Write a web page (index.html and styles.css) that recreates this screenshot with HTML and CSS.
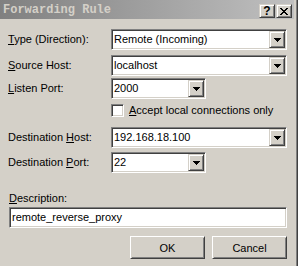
FILE: index.html
```html
<!DOCTYPE html>
<html lang="en">
<head>
    <meta charset="UTF-8">
    <meta name="viewport" content="width=device-width, initial-scale=1.0">
    <title>Forwarding Rule</title>
    <link rel="stylesheet" href="styles.css">
</head>
<body>
    <div class="window">
        <div class="titlebar">
            <span class="title">Forwarding Rule</span>
            <div class="caption-btns">
                <span class="cap-btn help">?</span>
                <span class="cap-btn close">
                    <svg width="8" height="7" viewBox="0 0 8 7" shape-rendering="crispEdges">
                        <path d="M0 0h2v1H0zM6 0h2v1H6zM1 1h2v1H1zM5 1h2v1H5zM2 2h4v1H2zM3 3h2v1H3zM2 4h4v1H2zM1 5h2v1H1zM5 5h2v1H5zM0 6h2v1H0zM6 6h2v1H6z" fill="#000"/>
                    </svg>
                </span>
            </div>
        </div>

        <div class="content">
            <div class="row row-type">
                <label class="lbl"><u>T</u>ype (Direction):</label>
                <div class="combo wide">
                    <span class="val">Remote (Incoming)</span>
                    <span class="drop"><svg width="7" height="4" viewBox="0 0 7 4" shape-rendering="crispEdges"><path d="M0 0h7v1H0zM1 1h5v1H1zM2 2h3v1H2zM3 3h1v1H3z" fill="#000"/></svg></span>
                </div>
            </div>
            <div class="row row-source">
                <label class="lbl"><u>S</u>ource Host:</label>
                <div class="combo wide">
                    <span class="val">localhost</span>
                    <span class="drop"><svg width="7" height="4" viewBox="0 0 7 4" shape-rendering="crispEdges"><path d="M0 0h7v1H0zM1 1h5v1H1zM2 2h3v1H2zM3 3h1v1H3z" fill="#000"/></svg></span>
                </div>
            </div>
            <div class="row row-listen">
                <label class="lbl"><u>L</u>isten Port:</label>
                <div class="combo narrow">
                    <span class="val">2000</span>
                    <span class="drop"><svg width="7" height="4" viewBox="0 0 7 4" shape-rendering="crispEdges"><path d="M0 0h7v1H0zM1 1h5v1H1zM2 2h3v1H2zM3 3h1v1H3z" fill="#000"/></svg></span>
                </div>
            </div>
            <div class="row row-check">
                <span class="check"></span>
                <span class="check-text"><u>A</u>ccept local connections only</span>
            </div>
            <div class="row row-dhost">
                <label class="lbl">Destination <u>H</u>ost:</label>
                <div class="combo wide">
                    <span class="val">192.168.18.100</span>
                    <span class="drop"><svg width="7" height="4" viewBox="0 0 7 4" shape-rendering="crispEdges"><path d="M0 0h7v1H0zM1 1h5v1H1zM2 2h3v1H2zM3 3h1v1H3z" fill="#000"/></svg></span>
                </div>
            </div>
            <div class="row row-dport">
                <label class="lbl">Destination <u>P</u>ort:</label>
                <div class="combo narrow">
                    <span class="val">22</span>
                    <span class="drop"><svg width="7" height="4" viewBox="0 0 7 4" shape-rendering="crispEdges"><path d="M0 0h7v1H0zM1 1h5v1H1zM2 2h3v1H2zM3 3h1v1H3z" fill="#000"/></svg></span>
                </div>
            </div>

            <div class="desc">
                <label class="desc-lbl"><u>D</u>escription:</label>
                <div class="field"><span class="val">remote_reverse_proxy</span></div>
            </div>

            <div class="buttons">
                <button class="btn">OK</button>
                <button class="btn">Cancel</button>
            </div>
        </div>
    </div>
</body>
</html>
```

FILE: styles.css
```css
body { margin: 0; background: #d4d0c8; font-family: "Liberation Sans", Arial, sans-serif; font-size: 11px; color: #000; }
.window { box-sizing: border-box; width: 298px; height: 266px; overflow: hidden; background: #d4d0c8; border-right: 1px solid #404040; box-shadow: inset -1px 0 #808080; padding-right: 3px; }

/* title bar */
.titlebar { height: 19px; display: flex; align-items: flex-start; justify-content: space-between; background: linear-gradient(to right, #808080, #c0c0c0); }
.title { margin: 4px 0 0 3px; font-family: "Liberation Mono", "Courier New", monospace; font-weight: bold; font-size: 12px; line-height: 13px; color: #d4d0c8; }
.caption-btns { display: flex; gap: 1px; margin: 4px 2px 0 0; }
.cap-btn { box-sizing: border-box; width: 16px; height: 14px; display: flex; align-items: center; justify-content: center; background: #d4d0c8; border: 1px solid; border-color: #d4d0c8 #404040 #404040 #d4d0c8; box-shadow: inset 1px 1px #fff, inset -1px -1px #808080; }
.help { font-weight: bold; font-size: 12px; line-height: 12px; }

/* form */
.content { padding: 10px 7px 0 8px; }
.row { display: flex; align-items: center; height: 21px; }
.lbl { width: 103px; flex: none; line-height: 13px; }
.row-source { margin-top: 5px; }
.row-listen { margin-top: 2px; }
.row-check { margin-top: 5px; height: 13px; padding-left: 103px; }
.row-dhost { margin-top: 10px; }
.row-dport { margin-top: 4px; }

.combo, .field { box-sizing: border-box; height: 21px; display: flex; align-items: stretch; background: #fff; border: 1px solid; border-color: #808080 #fff #fff #808080; box-shadow: inset 1px 1px #404040, inset -1px -1px #d4d0c8; padding: 1px; }
.combo.wide { flex: 1; }
.combo.narrow { width: 95px; }
.val { flex: 1; padding-left: 1px; line-height: 17px; white-space: nowrap; overflow: hidden; }
.drop { box-sizing: border-box; width: 16px; flex: none; display: flex; align-items: center; justify-content: center; background: #d4d0c8; border: 1px solid; border-color: #d4d0c8 #404040 #404040 #d4d0c8; box-shadow: inset 1px 1px #fff, inset -1px -1px #808080; }

.check { box-sizing: border-box; width: 13px; height: 13px; flex: none; background: #fff; border: 1px solid; border-color: #808080 #fff #fff #808080; box-shadow: inset 1px 1px #404040, inset -1px -1px #d4d0c8; }
.check-text { margin-left: 5px; line-height: 13px; }

.desc { margin: 19px 0 0 1px; }
.desc-lbl { display: block; line-height: 13px; }
.field { margin-top: 2px; }

.buttons { display: flex; justify-content: flex-end; gap: 7px; margin-top: 8px; }
.btn { box-sizing: border-box; width: 75px; height: 23px; padding: 0; font: inherit; color: #000; background: #d4d0c8; border: 1px solid; border-color: #fff #404040 #404040 #fff; box-shadow: inset 1px 1px #d4d0c8, inset -1px -1px #808080; }
```
